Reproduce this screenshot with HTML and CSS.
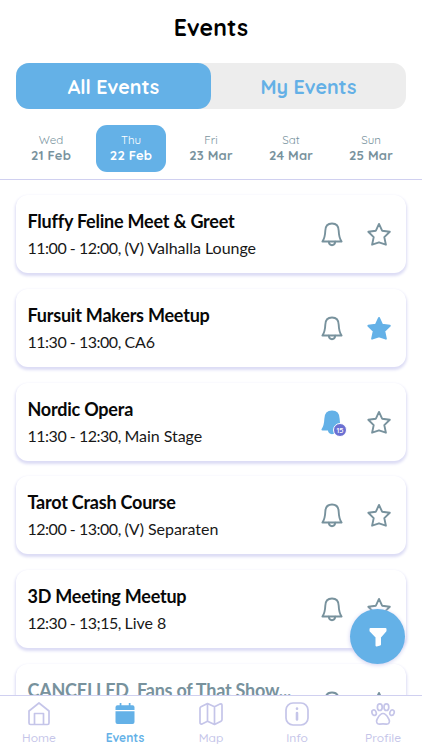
FILE: index.html
```html
<!DOCTYPE html>
<html lang="en">
<head>
<meta charset="utf-8">
<title>Events</title>
<link rel="stylesheet" href="styles.css">
</head>
<body>
<svg class="defs" aria-hidden="true">
  <symbol id="bell" viewBox="0 0 24 25"><path d="M2.400 19.500C4.600 16.600 5.100 13.800 5.300 8.800C5.400 4.200 8 1.500 12 1.500s6.600 2.700 6.700 7.300c.2 5 .7 7.800 2.900 10.700Z"/><path d="M8.800 19.700c.2 2.500 1.500 3.500 3.200 3.500s3-1 3.200-3.500"/></symbol>
  <symbol id="star" viewBox="0 0 24 25"><path d="m12 1.900 3.100 6.800 7.700 1.100-5.500 5.300 1.600 7.600-6.900-2.400-6.900 2.400 1.600-7.600-5.400-5.300 7.600-1.100Z"/></symbol>
</svg>
<div class="app">
  <h1 class="title">Events</h1>
  <div class="switch"><div class="segment segment-on">All Events</div><div class="segment">My Events</div></div>
  <div class="days">
    <div class="day"><span class="dow">Wed</span><span class="date">21 Feb</span></div>
    <div class="day day-on"><span class="dow">Thu</span><span class="date">22 Feb</span></div>
    <div class="day"><span class="dow">Fri</span><span class="date">23 Mar</span></div>
    <div class="day"><span class="dow">Sat</span><span class="date">24 Mar</span></div>
    <div class="day"><span class="dow">Sun</span><span class="date">25 Mar</span></div>
  </div>
  <main class="list">
    <article class="card"><div class="info"><h2>Fluffy Feline Meet &amp; Greet</h2><p><span class="time">11:00 - 12:00, </span>(V) Valhalla Lounge</p></div><svg class="icon"><use href="#bell"/></svg><svg class="icon"><use href="#star"/></svg></article>
    <article class="card"><div class="info"><h2>Fursuit Makers Meetup</h2><p><span class="time">11:30 - 13:00, </span>CA6</p></div><svg class="icon"><use href="#bell"/></svg><svg class="icon icon-on"><use href="#star"/></svg></article>
    <article class="card"><div class="info"><h2>Nordic Opera</h2><p><span class="time">11:30 - 12:30, </span>Main Stage</p></div><div class="alarm"><svg class="icon icon-on"><use href="#bell"/></svg><span class="badge">15</span></div><svg class="icon"><use href="#star"/></svg></article>
    <article class="card"><div class="info"><h2>Tarot Crash Course</h2><p><span class="time">12:00 - 13:00, </span>(V) Separaten</p></div><svg class="icon"><use href="#bell"/></svg><svg class="icon"><use href="#star"/></svg></article>
    <article class="card"><div class="info"><h2>3D Meeting Meetup</h2><p><span class="time">12:30 - 13;15, </span>Live 8</p></div><svg class="icon"><use href="#bell"/></svg><svg class="icon"><use href="#star"/></svg></article>
    <article class="card cancelled"><div class="info"><h2>CANCELLED_Fans of That Show...</h2></div><svg class="icon"><use href="#bell"/></svg><svg class="icon"><use href="#star"/></svg></article>
  </main>
  <button class="filter" aria-label="Filter"><svg viewBox="0 0 20 20"><path d="M2.500 2h15v1.800L12 10v7.500l-3.500 1V10L2.500 3.800Z"/></svg></button>
  <nav class="tabs">
    <div class="tab"><svg viewBox="0 0 26 26"><path d="M3 10 13 2l10 8v12q0 1.500-1.500 1.500h-17Q3 23.500 3 22ZM8.500 23.500V12.500h9v11"/></svg><span>Home</span></div>
    <div class="tab tab-on"><svg viewBox="0 0 26 26"><path class="solid" d="M5.500 4.300H7.700V2h1.700v2.300h7.400V2h1.700v2.300h2q2 0 2 2V9h-19V6.300q0-2 2-2ZM3.500 10.300h19v10.800q0 2-2 2h-15q-2 0-2-2Z"/></svg><span>Events</span></div>
    <div class="tab"><svg viewBox="0 0 26 26"><path d="m9.500 2.500 7 3.300 5.500-2.700q2-.7 2 1.300V18.500q0 1.200-1 1.700l-6.500 3.300-7-3.300-5.500 2.700Q2 23.500 2 21.500V7.300q0-1 1-1.500ZM9.500 2.500v17.700M16.500 5.800v17.700"/></svg><span>Map</span></div>
    <div class="tab"><svg viewBox="0 0 26 26"><rect x="2" y="2" width="22" height="22" rx="7"/><path class="stem" d="M13 12v6.500M13 7.500v.3"/></svg><span>Info</span></div>
    <div class="tab"><svg viewBox="0 0 26 26"><ellipse cx="9.800" cy="6.200" rx="2.400" ry="3.300"/><ellipse cx="16.400" cy="6.200" rx="2.400" ry="3.300"/><ellipse cx="4.100" cy="11.700" rx="2.100" ry="2.800" transform="rotate(-20 4.100 11.700)"/><ellipse cx="22" cy="11.700" rx="2.100" ry="2.800" transform="rotate(20 22 11.700)"/><path d="M13 12.500c-3.300 0-4.700 3.600-6 6-1.300 2.600.2 4.800 2.700 4.600 1.700-.2 4.900-.2 6.600 0 2.500.2 4-2 2.700-4.600C17.700 16.100 16.300 12.500 13 12.500Z"/></svg><span>Profile</span></div>
  </nav>
</div>
</body>
</html>
```
FILE: styles.css
```css
* { box-sizing: border-box; margin: 0; padding: 0; }
body { background: #fff; }
.defs { display: none; }
.app {
  position: relative;
  display: flex;
  flex-direction: column;
  width: 422px;
  height: 750px;
  overflow: hidden;
  font-family: Quicksand, Inter, sans-serif;
  font-feature-settings: "cv11" 1;
}
.title { height: 63px; padding-top: 14px; font-size: 23px; line-height: 28px; font-weight: 700; text-align: center; letter-spacing: .1px; flex: none; }
.switch { flex: none; display: flex; height: 46px; margin: 0 16px; border-radius: 13px; background: #ededed; }
.segment { flex: 1; display: flex; align-items: center; justify-content: center; border-radius: 13px; color: #64b0e6; font-size: 19.600px; font-weight: 700; padding-top: 1px; }
.segment-on { background: #64b1e7; color: #fff; }
.days { flex: none; display: grid; grid-template-columns: repeat(5, 70px); gap: 10px; justify-content: center; height: 71px; padding-top: 16px; border-bottom: 1.500px solid #d0d0f0; }
.day { display: flex; flex-direction: column; align-items: center; height: 47px; padding-top: 7px; border-radius: 11px; color: #78929d; }
.day-on { background: #64b1e7; color: #fff; }
.dow { font-size: 11.500px; line-height: 15px; }
.date { font-size: 13px; line-height: 17px; font-weight: 700; letter-spacing: .15px; white-space: nowrap; }
.list { flex: 1; min-height: 0; overflow: hidden; display: flex; flex-direction: column; gap: 15.700px; padding: 15.300px 16px 0; font-family: Lato, sans-serif; }
.card { flex: none; display: flex; height: 78px; padding: 0 15px 0 11.500px; border-radius: 12px; background: #fff; box-shadow: 0 2px 3px 1px #dcdcf5; }
.info { flex: 1; padding-top: 15px; white-space: nowrap; }
.card h2 { font-size: 18px; line-height: 22px; font-weight: 700; letter-spacing: -.22px; color: #080808; }
.card p { margin-top: 6px; font-size: 16px; line-height: 20px; letter-spacing: -.03px; color: #181818; }
.card .time { letter-spacing: -.48px; }
.icon { display: block; width: 24px; height: 25px; margin: 27px 0 0 23px; fill: none; stroke: #78929d; stroke-width: 1.900; stroke-linejoin: round; stroke-linecap: round; }
.icon-on { fill: #64b1e7; stroke: #64b1e7; }
.alarm { position: relative; }
.badge { position: absolute; left: 36px; top: 40px; width: 14px; height: 14px; border: 1px solid #fff; border-radius: 50%; background: #6b70d2; color: #fff; font: 600 7.500px/12px Quicksand, Inter, sans-serif; text-align: center; }
.cancelled h2 { color: #78929d; }
.filter { position: absolute; right: 17px; bottom: 86px; width: 55px; height: 55px; display: flex; align-items: center; justify-content: center; border: 0; border-radius: 50%; background: #64b1e7; box-shadow: 0 1px 4px #cfcff0; }
.filter svg { width: 20px; height: 20px; fill: #fff; stroke: #fff; stroke-width: 2; stroke-linejoin: round; }
.tabs { flex: none; display: grid; grid-template-columns: repeat(5, 86px); justify-content: center; width: 430px; margin-left: -4px; height: 55px; padding-top: 5px; border-top: 1.500px solid #d0d0f0; background: #fff; }
.tab { display: flex; flex-direction: column; align-items: center; color: #c5c5e9; font-size: 12px; line-height: 16px; font-weight: 500; }
.tab svg { width: 26px; height: 26px; margin-bottom: 3px; fill: none; stroke: currentColor; stroke-width: 1.700; stroke-linejoin: round; }
.tab .solid { fill: currentColor; stroke: none; }
.tab .stem { stroke-width: 2.600; stroke-linecap: round; }
.tab-on { color: #64b1e7; font-weight: 700; }
```
